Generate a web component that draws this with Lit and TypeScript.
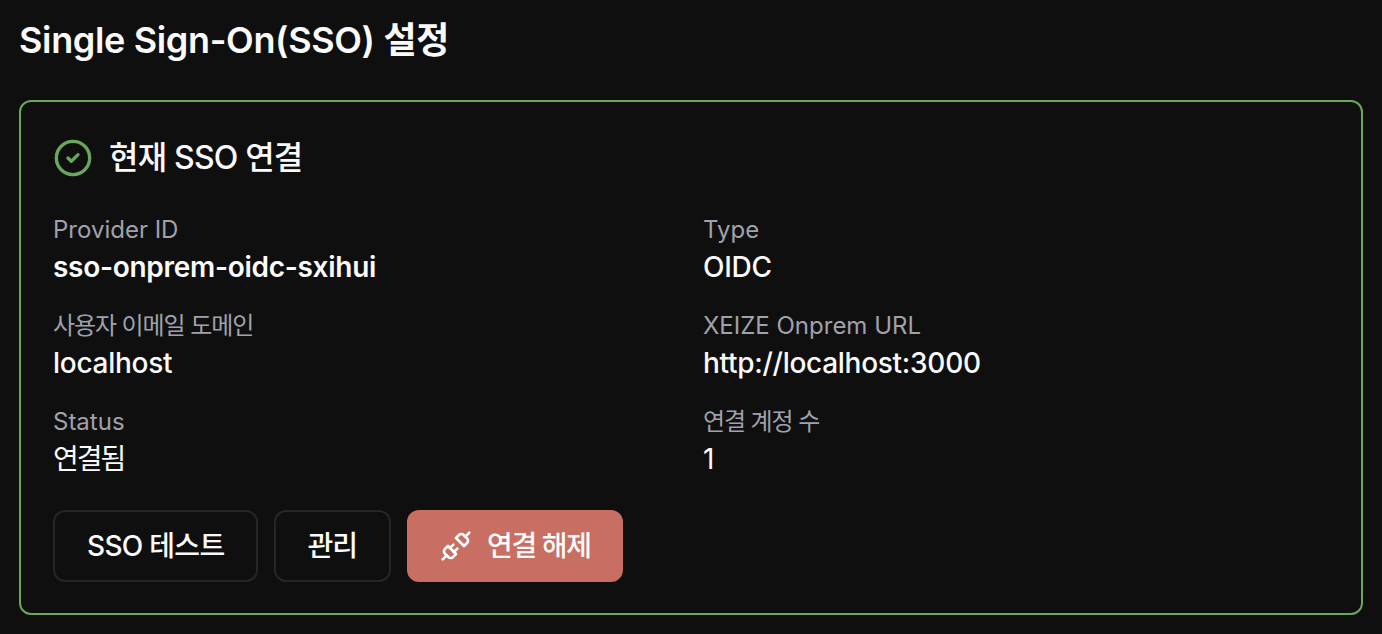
import { LitElement, html, css, svg } from "lit";
import { customElement } from "lit/decorators.js";

const fields = [
  ["Provider ID", "sso-onprem-oidc-sxihui", "bold"],
  ["Type", "OIDC", ""],
  ["사용자 이메일 도메인", "localhost", ""],
  ["XEIZE Onprem URL", "http://localhost:3000", ""],
  ["Status", "연결됨", "ko"],
  ["연결 계정 수", "1", "ko"],
] as const;

@customElement("app-root")
export class AppRoot extends LitElement {
  static styles = css`
    :host {
      display: block;
      width: 1382px;
      height: 634px;
      overflow: hidden;
      background: #0f0f10;
      color: #fafafa;
      font-family: Inter, "Noto Sans CJK KR", sans-serif;
      box-sizing: border-box;
      padding: 16px 19px 0;
    }
    h1 {
      margin: 0;
      font-size: 36px;
      line-height: 48px;
      font-weight: 600;
      letter-spacing: -0.35px;
    }
    .card {
      margin-top: 36px;
      height: 515px;
      box-sizing: border-box;
      border: 2px solid #6aa75c;
      border-radius: 12px;
      padding: 32px;
      display: flex;
      flex-direction: column;
    }
    .head {
      display: flex;
      align-items: center;
      gap: 16px;
      height: 48px;
    }
    .head svg { width: 40px; height: 40px; display: block; }
    h2 {
      margin: 0;
      font-size: 32px;
      line-height: 48px;
      font-weight: 500;
      letter-spacing: -0.8px;
    }
    .grid {
      margin-top: 30px;
      display: grid;
      grid-template-columns: 1fr 1fr;
      column-gap: 24px;
      row-gap: 22px;
    }
    .label {
      font-size: 24px;
      line-height: 36px;
      color: #a1a1aa;
      font-weight: 400;
    }
    .label.ko { letter-spacing: -1.1px; }
    .value {
      font-size: 28px;
      line-height: 38px;
      font-weight: 500;
      letter-spacing: -0.28px;
    }
    .value.bold { font-weight: 600; }
    .value.ko { letter-spacing: -2px; font-weight: 400; }
    .actions {
      margin-top: 32px;
      display: flex;
      gap: 16px;
    }
    button {
      height: 72px;
      box-sizing: border-box;
      border-radius: 12px;
      border: 2px solid #262627;
      background: transparent;
      color: #fafafa;
      font: 500 28px/40px Inter, "Noto Sans CJK KR", sans-serif;
      letter-spacing: -0.7px;
      padding: 0 31px 0 32px;
      display: flex;
      align-items: center;
    }
    .short { letter-spacing: -1px; padding: 0 32px; }
    .danger {
      background: #c96e62;
      border-color: #c96e62;
      letter-spacing: -1.4px;
      padding: 0 30px 0 31px;
      gap: 15px;
    }
    .danger svg { width: 32px; height: 32px; display: block; }
  `;

  render() {
    return html`
      <h1>Single Sign-On(SSO) 설정</h1>
      <section class="card">
        <div class="head">
          <svg viewBox="0 0 24 24" fill="none" stroke="#6aa75c" stroke-width="2" stroke-linecap="round" stroke-linejoin="round">
            <circle cx="12" cy="12" r="10"></circle>
            <path d="m9 12 2 2 4-4"></path>
          </svg>
          <h2>현재 SSO 연결</h2>
        </div>
        <div class="grid">
          ${fields.map(
            ([l, v, c], i) => html`<div>
              <div class="label ${i === 2 || i === 5 ? "ko" : ""}">${l}</div>
              <div class="value ${c}">${v}</div>
            </div>`
          )}
        </div>
        <div class="actions">
          <button>SSO 테스트</button>
          <button class="short">관리</button>
          <button class="danger">
            <svg viewBox="0 0 24 24" fill="none" stroke="#fff" stroke-width="2" stroke-linecap="round" stroke-linejoin="round">
              ${svg`<path d="m19 5 3-3"></path><path d="m2 22 3-3"></path>
              <path d="M6.3 20.3a2.4 2.4 0 0 0 3.4 0L12 18l-6-6-2.3 2.3a2.4 2.4 0 0 0 0 3.4Z"></path>
              <path d="M7.5 13.5 10 11"></path><path d="M10.5 16.5 13 14"></path>
              <path d="m12 6 6 6 2.3-2.3a2.4 2.4 0 0 0 0-3.4l-2.6-2.6a2.4 2.4 0 0 0-3.4 0Z"></path>`}
            </svg>
            연결 해제
          </button>
        </div>
      </section>
    `;
  }
}
